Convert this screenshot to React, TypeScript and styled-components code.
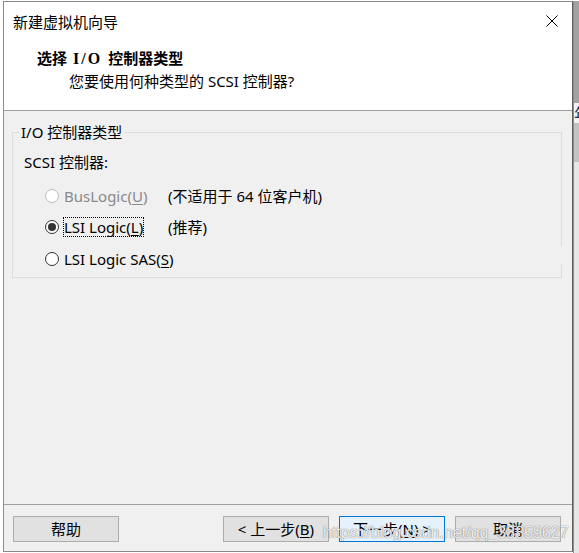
import React from "react";
import styled, { createGlobalStyle } from "styled-components";

const GlobalStyle = createGlobalStyle`
  html, body {
    margin: 0;
    padding: 0;
    background: #ffffff;
  }
  body {
    width: 579px;
    height: 553px;
    overflow: hidden;
    font-family: "Noto Sans", "Noto Sans CJK SC", sans-serif;
    font-size: 15px;
    color: #000;
  }
  * { box-sizing: border-box; }
`;

const Screen = styled.div`
  position: relative;
  display: flex;
  width: 579px;
  height: 553px;
  padding: 1px 0 0 3px;
`;

const Window = styled.div`
  width: 570px;
  height: 551px;
  border: 1px solid #8a8a8a;
  border-right-color: #5e5e5e;
  display: flex;
  flex-direction: column;
  background: #f0f0f0;
`;

const Header = styled.div`
  height: 109px;
  background: #ffffff;
  border-bottom: 1px solid #a0a0a0;
  display: flex;
  flex-direction: column;
`;

const TitleBar = styled.div`
  height: 39px;
  display: flex;
  align-items: center;
  justify-content: space-between;
  padding-left: 9px;
`;

const TitleText = styled.div`
  font-size: 15px;
  line-height: 20px;
  font-family: "Noto Sans CJK SC", sans-serif;
`;

const CloseBox = styled.div`
  width: 40px;
  height: 39px;
  display: flex;
  align-items: center;
  justify-content: center;
  padding-bottom: 2px;
`;

const HeaderBody = styled.div`
  display: flex;
  flex-direction: column;
  padding-top: 7px;
`;

const Heading = styled.div`
  margin-left: 33px;
  font-family: "Noto Sans CJK SC", sans-serif;
  font-weight: 700;
  font-size: 15px;
  line-height: 20px;
  white-space: pre;
`;

const Roman = styled.span`
  font-family: "Liberation Serif", serif;
  font-weight: 700;
  font-size: 16px;
  letter-spacing: 2px;
`;

const SubHeading = styled.div`
  margin-top: 2px;
  margin-left: 65px;
  font-size: 15px;
  line-height: 20px;
`;

const Content = styled.div`
  flex: 1;
  padding: 11px 10px 0 8px;
`;

const GroupBox = styled.fieldset`
  position: relative;
  margin: 0;
  padding: 10px 0 8px 0;
  border: 1px solid #dcdcdc;
  min-width: 0;
`;

const Legend = styled.legend`
  margin-left: 6px;
  padding: 0 2px;
  font-size: 15px;
  line-height: 20px;
`;

const BorderGap = styled.div`
  position: absolute;
  right: -1px;
  top: 104px;
  width: 1px;
  height: 18px;
  background: #f0f0f0;
`;

const FieldLabel = styled.div`
  margin-left: 11px;
  font-size: 15px;
  line-height: 20px;
`;

const OptionRow = styled.div<{ $gap: number }>`
  display: flex;
  align-items: center;
  height: 20px;
  margin-top: ${(p) => p.$gap}px;
  padding-left: 32px;
`;

const OptionMain = styled.div`
  width: 123px;
  display: flex;
  align-items: center;
  flex-shrink: 0;
`;

const RadioCircle = styled.span<{ $checked?: boolean; $disabled?: boolean }>`
  width: 14px;
  height: 14px;
  border-radius: 50%;
  border: 1px solid ${(p) => (p.$disabled ? "#bcbcbc" : "#333333")};
  background: #ffffff;
  display: flex;
  align-items: center;
  justify-content: center;
  flex-shrink: 0;
  &::after {
    content: "";
    display: ${(p) => (p.$checked ? "block" : "none")};
    width: 8px;
    height: 8px;
    border-radius: 50%;
    background: #333333;
  }
`;

const OptionLabel = styled.span<{ $focused?: boolean; $disabled?: boolean }>`
  margin-left: 4px;
  height: 20px;
  padding: 0;
  border: 1px dotted ${(p) => (p.$focused ? "#000" : "transparent")};
  line-height: 18px;
  font-size: 15px;
  white-space: nowrap;
  color: ${(p) => (p.$disabled ? "#8a8a8a" : "#000")};
`;

const Note = styled.span`
  font-size: 15px;
  line-height: 20px;
  white-space: nowrap;
`;

const Mnemonic = styled.span`
  text-decoration: underline;
  text-underline-offset: 2px;
  text-decoration-thickness: 1px;
`;

const Footer = styled.div`
  height: 47px;
  border-top: 1px solid #a0a0a0;
  padding: 11px 11px 0 9px;
  display: flex;
  align-items: flex-start;
`;

const Spacer = styled.div`
  flex: 1;
`;

const NavGroup = styled.div`
  display: flex;
  gap: 10px;
`;

const Button = styled.button<{ $primary?: boolean }>`
  width: 106px;
  height: 26px;
  padding: 0;
  margin: 0;
  font-family: "Noto Sans", "Noto Sans CJK SC", sans-serif;
  font-size: 15px;
  line-height: 22px;
  color: #000;
  background: ${(p) => (p.$primary ? "#e5f1fb" : "#e1e1e1")};
  border: 1px solid ${(p) => (p.$primary ? "#0078d7" : "#adadad")};
  display: flex;
  align-items: center;
  justify-content: center;
`;

const SideStrip = styled.div`
  width: 6px;
  height: 552px;
  display: flex;
  flex-direction: column;
  border-left: 1px solid #8c8c8c;
`;

const StripTop = styled.div`
  height: 102px;
  background: #a2a2a2;
`;

const StripGlyph = styled.div`
  height: 20px;
  background: #f2f2f2;
  overflow: hidden;
  font-family: "Noto Sans CJK SC", sans-serif;
  font-size: 16px;
  line-height: 20px;
  color: #1a2a5a;
  white-space: nowrap;
`;

const StripThumb = styled.div`
  height: 39px;
  background: #c2c2c2;
`;

const StripRest = styled.div`
  flex: 1;
  background: #e6e6e6;
`;

const Watermark = styled.div`
  position: absolute;
  left: 323px;
  top: 523px;
  font-family: "Liberation Sans", Arial, sans-serif;
  font-size: 16px;
  line-height: 20px;
  color: rgba(255, 255, 255, 0.9);
  text-shadow: 0 0 1px rgba(80, 80, 80, 0.7), 0 0 1px rgba(80, 80, 80, 0.5);
  white-space: nowrap;
  pointer-events: none;
`;

const CloseIcon = () => (
  <svg width="12" height="12" viewBox="0 0 12 12">
    <path d="M0.5 0.5 L11.5 11.5 M11.5 0.5 L0.5 11.5" stroke="#000" strokeWidth="1" fill="none" />
  </svg>
);

type Option = {
  label: string;
  key: string;
  suffix: string;
  note?: string;
  checked?: boolean;
  disabled?: boolean;
  focused?: boolean;
  gap: number;
};

const options: Option[] = [
  { label: "BusLogic(", key: "U", suffix: ")", note: "(不适用于 64 位客户机)", disabled: true, gap: 14 },
  { label: "LSI Logic(", key: "L", suffix: ")", note: "(推荐)", checked: true, focused: true, gap: 11 },
  { label: "LSI Logic SAS(", key: "S", suffix: ")", gap: 12 },
];

export default function App() {
  return (
    <>
      <GlobalStyle />
      <Screen>
        <Window>
          <Header>
            <TitleBar>
              <TitleText>新建虚拟机向导</TitleText>
              <CloseBox>
                <CloseIcon />
              </CloseBox>
            </TitleBar>
            <HeaderBody>
              <Heading>
                选择<Roman> I/O </Roman>控制器类型
              </Heading>
              <SubHeading>您要使用何种类型的 SCSI 控制器?</SubHeading>
            </HeaderBody>
          </Header>
          <Content>
            <GroupBox>
              <Legend>I/O 控制器类型</Legend>
              <BorderGap />
              <FieldLabel>SCSI 控制器:</FieldLabel>
              {options.map((o) => (
                <OptionRow key={o.label} $gap={o.gap}>
                  <OptionMain>
                    <RadioCircle $checked={o.checked} $disabled={o.disabled} />
                    <OptionLabel $focused={o.focused} $disabled={o.disabled}>
                      {o.label}
                      <Mnemonic>{o.key}</Mnemonic>
                      {o.suffix}
                    </OptionLabel>
                  </OptionMain>
                  {o.note && <Note>{o.note}</Note>}
                </OptionRow>
              ))}
            </GroupBox>
          </Content>
          <Footer>
            <Button>帮助</Button>
            <Spacer />
            <NavGroup>
              <Button>
                &lt; 上一步(<Mnemonic>B</Mnemonic>)
              </Button>
              <Button $primary>
                下一步(<Mnemonic>N</Mnemonic>) &gt;
              </Button>
              <Button>取消</Button>
            </NavGroup>
          </Footer>
        </Window>
        <SideStrip>
          <StripTop />
          <StripGlyph>年</StripGlyph>
          <StripThumb />
          <StripRest />
        </SideStrip>
        <Watermark>https://blog.csdn.net/qq_38859627</Watermark>
      </Screen>
    </>
  );
}
